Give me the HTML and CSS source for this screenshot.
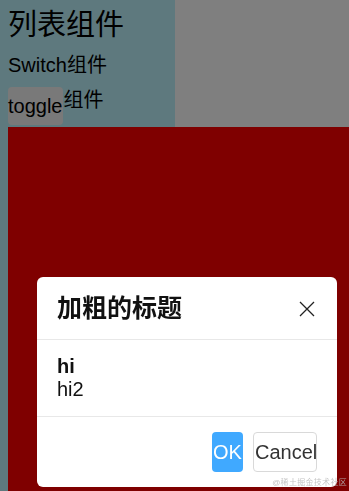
FILE: index.html
```html
<!DOCTYPE html>
<html lang="zh">
<head>
<meta charset="utf-8">
<title>列表组件</title>
<link rel="stylesheet" href="styles.css">
</head>
<body>
<div class="sidebar">
  <h1 class="title">列表组件</h1>
  <p class="switch-row">Switch组件</p>
  <div class="toggle-row">
    <button class="toggle-btn">toggle</button>
    <span class="toggle-label">组件</span>
  </div>
  <div class="red-box"></div>
</div>

<div class="overlay">
  <div class="modal">
    <div class="modal-header">
      <h2 class="modal-title">加粗的标题</h2>
      <button class="modal-close" aria-label="close">
        <svg width="16" height="16" viewBox="0 0 16 16"><path d="M1 1 L15 15 M15 1 L1 15" stroke="#222" stroke-width="1.3" fill="none"/></svg>
      </button>
    </div>
    <div class="modal-body">
      <div class="body-bold">hi</div>
      <div>hi2</div>
    </div>
    <div class="modal-footer">
      <button class="btn btn-ok">OK</button>
      <button class="btn btn-cancel">Cancel</button>
    </div>
  </div>
  <div class="watermark">@稀土掘金技术社区</div>
</div>
</body>
</html>
```

FILE: styles.css
```css
html, body {
  margin: 0;
  padding: 0;
  overflow: hidden;
  background: #ffffff;
  font-family: "Liberation Sans", "Noto Sans CJK SC", sans-serif;
  color: #000;
}

.sidebar {
  width: 175px;
  box-sizing: border-box;
  height: 491px;
  padding-left: 8px;
  background: #bdf2fc;
}

.title {
  margin: 0;
  font-size: 29px;
  font-weight: normal;
  line-height: 50px;
  height: 46px;
}

.switch-row {
  margin: 0;
  font-size: 20px;
  line-height: 38px;
  height: 38px;
}

.toggle-row {
  display: flex;
  align-items: flex-start;
  margin-top: 3px;
  height: 38px;
  font-size: 20px;
}

.toggle-btn {
  font-family: inherit;
  font-size: 20px;
  line-height: 23px;
  height: 38px;
  padding: 0;
  border: none;
  border-radius: 4px;
  background: #f2f2f2;
  color: #000;
}

.toggle-label {
  line-height: 23px;
  padding-top: 2px;
  padding-left: 1px;
}

.red-box {
  margin-top: 2px;
  width: 341px;
  height: 364px;
  background: #ff0000;
}

.overlay {
  position: fixed;
  inset: 0;
  background: rgba(0, 0, 0, 0.5);
  padding: 277px 0 0 37px;
  box-sizing: border-box;
}

.modal {
  width: 300px;
  background: #fff;
  border-radius: 6px;
  overflow: hidden;
}

.modal-header {
  height: 62px;
  display: flex;
  align-items: center;
  justify-content: space-between;
  padding: 0 22px 0 20px;
  border-bottom: 1px solid #e8e8e8;
}

.modal-title {
  margin: 0;
  font-size: 25px;
  font-weight: bold;
  line-height: 30px;
  color: #111;
}

.modal-close {
  border: none;
  background: none;
  padding: 0;
  width: 16px;
  height: 16px;
  display: flex;
  margin-top: 2px;
}

.modal-body {
  padding: 15px 20px;
  font-size: 20px;
  line-height: 23px;
  color: #111;
}

.body-bold {
  font-weight: bold;
}

.modal-footer {
  display: flex;
  justify-content: flex-end;
  gap: 10px;
  padding: 15px 20px;
  border-top: 1px solid #e8e8e8;
}

.btn {
  font-family: inherit;
  font-size: 20px;
  height: 40px;
  border-radius: 4px;
  padding: 0 1px;
  cursor: pointer;
}

.btn-ok {
  background: #40a9ff;
  color: #fff;
  border: none;
  width: 31px;
}

.btn-cancel {
  background: #fff;
  color: #333;
  border: 1px solid #d9d9d9;
  width: 64px;
}

.watermark {
  position: absolute;
  right: 2px;
  bottom: 3px;
  font-size: 8px;
  line-height: 10px;
  color: rgba(185, 185, 185, 0.85);
  letter-spacing: 0.3px;
}
```
